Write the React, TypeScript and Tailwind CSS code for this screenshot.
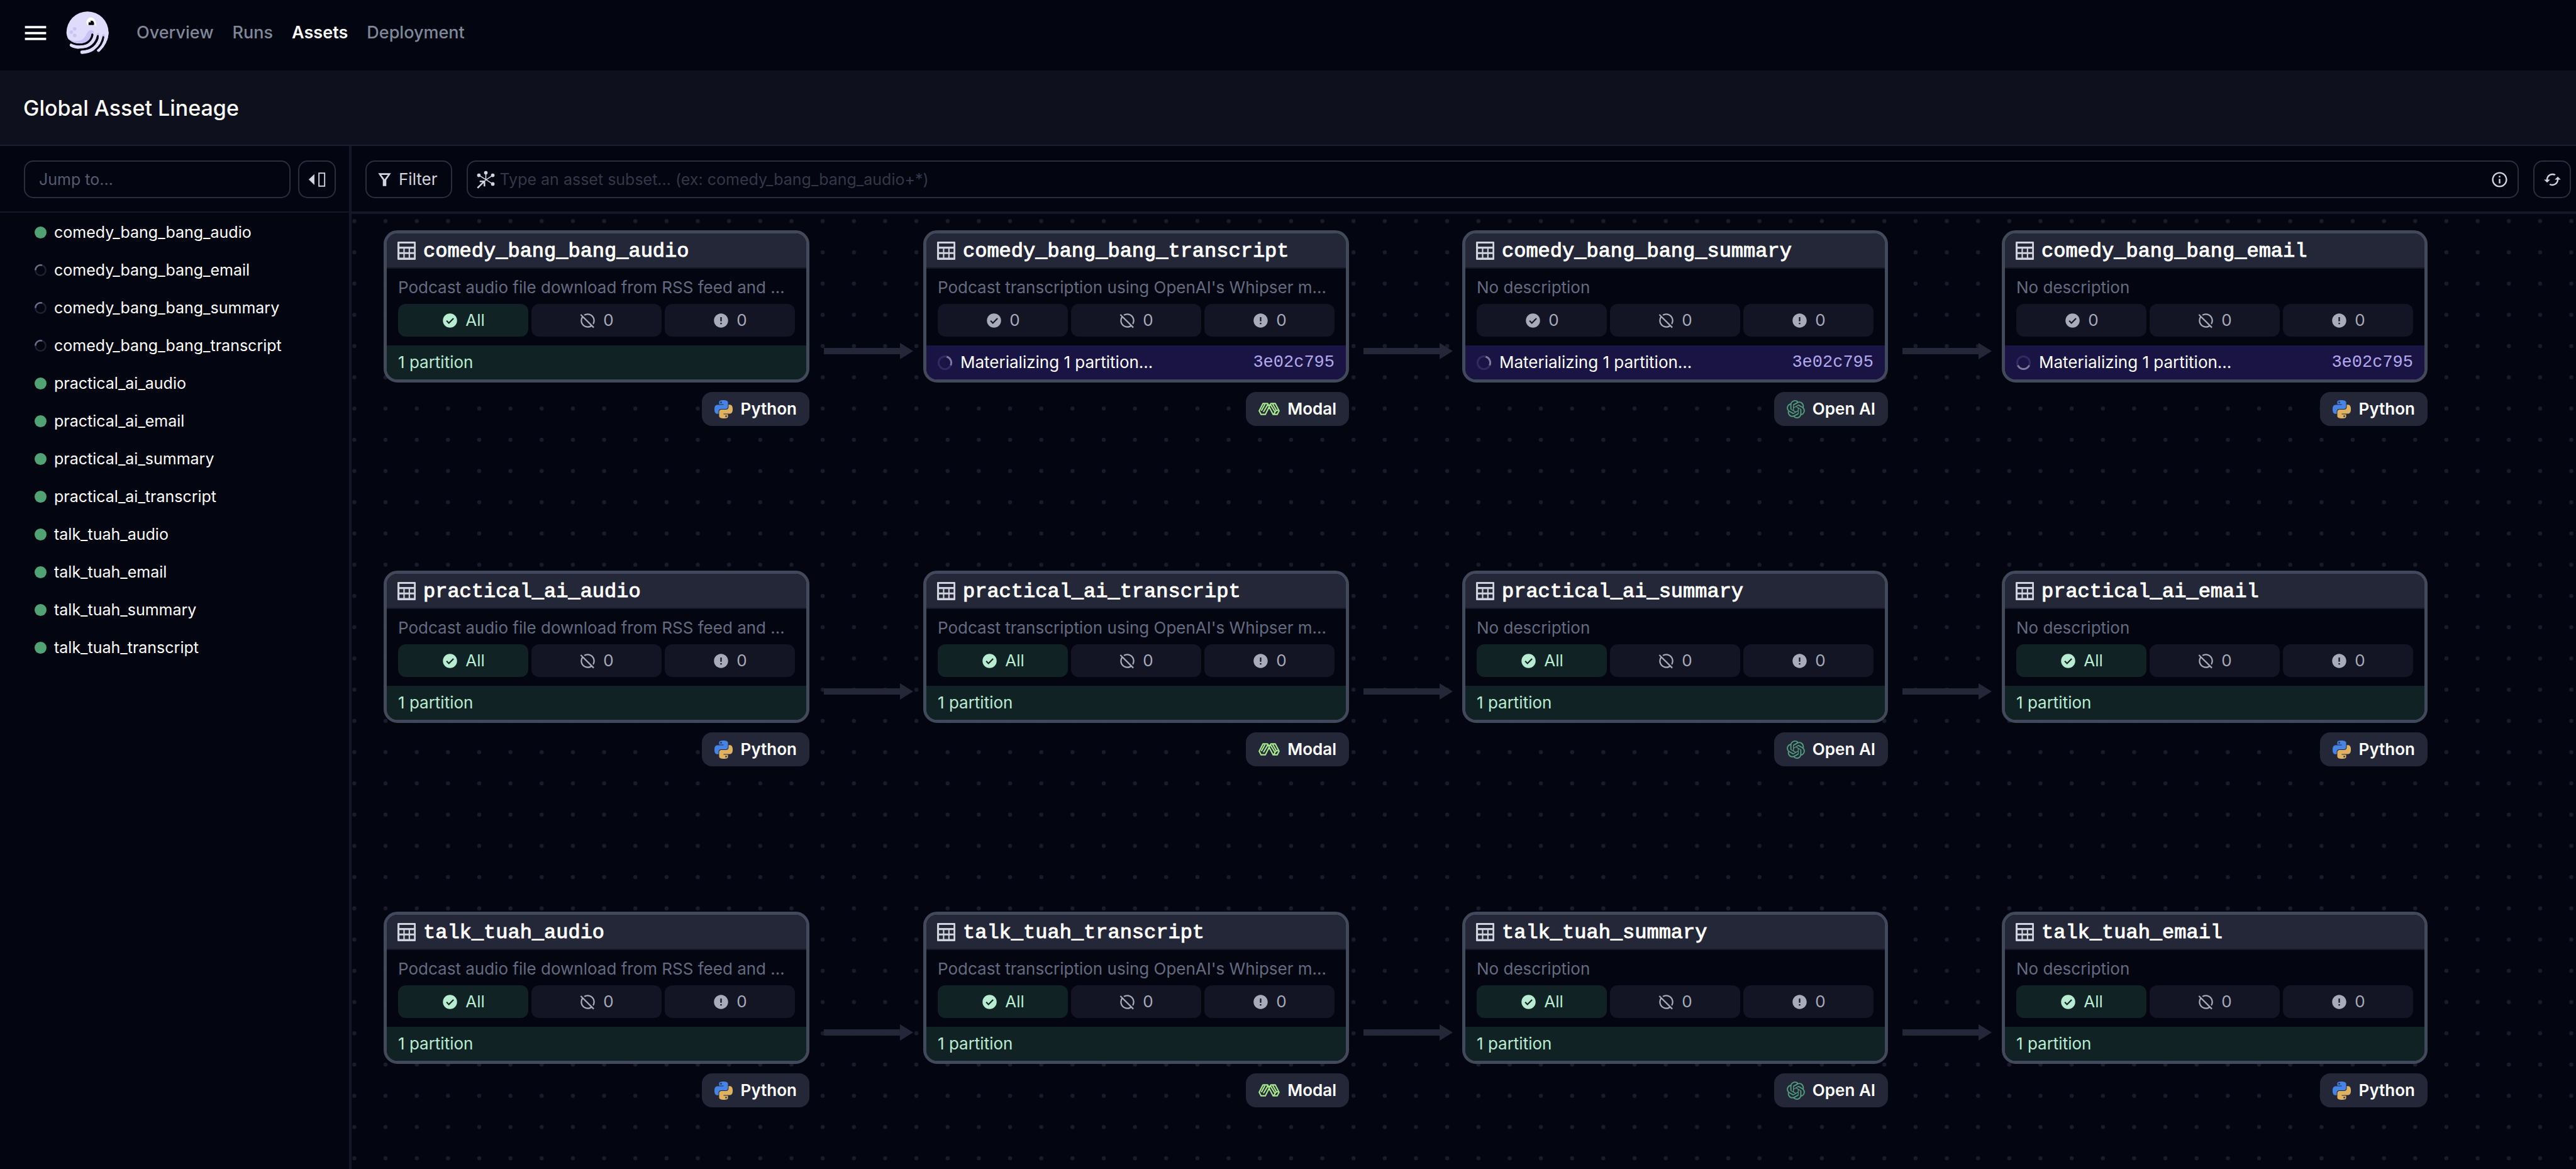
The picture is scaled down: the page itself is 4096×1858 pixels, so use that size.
import type { ReactNode } from "react";
import { MdCached, MdError, MdHideSource, MdInfoOutline, MdMenu } from "react-icons/md";
import { SiOpenai } from "react-icons/si";

type Kind = "python" | "modal" | "openai";

type AssetNode = {
  name: string;
  description: string;
  kind: Kind;
  x: number;
  y: number;
  running?: "top" | "bottom";
};

const AUDIO = "Podcast audio file download from RSS feed and …";
const TRANSCRIPT = "Podcast transcription using OpenAI's Whipser m…";
const NONE = "No description";

const COLUMNS = [51, 909, 1766, 2624];
const ROWS = [26, 567, 1109];

const NODES: AssetNode[] = [
  { name: "comedy_bang_bang_audio", description: AUDIO, kind: "python", x: COLUMNS[0], y: ROWS[0] },
  { name: "comedy_bang_bang_transcript", description: TRANSCRIPT, kind: "modal", x: COLUMNS[1], y: ROWS[0], running: "top" },
  { name: "comedy_bang_bang_summary", description: NONE, kind: "openai", x: COLUMNS[2], y: ROWS[0], running: "top" },
  { name: "comedy_bang_bang_email", description: NONE, kind: "python", x: COLUMNS[3], y: ROWS[0], running: "bottom" },
  { name: "practical_ai_audio", description: AUDIO, kind: "python", x: COLUMNS[0], y: ROWS[1] },
  { name: "practical_ai_transcript", description: TRANSCRIPT, kind: "modal", x: COLUMNS[1], y: ROWS[1] },
  { name: "practical_ai_summary", description: NONE, kind: "openai", x: COLUMNS[2], y: ROWS[1] },
  { name: "practical_ai_email", description: NONE, kind: "python", x: COLUMNS[3], y: ROWS[1] },
  { name: "talk_tuah_audio", description: AUDIO, kind: "python", x: COLUMNS[0], y: ROWS[2] },
  { name: "talk_tuah_transcript", description: TRANSCRIPT, kind: "modal", x: COLUMNS[1], y: ROWS[2] },
  { name: "talk_tuah_summary", description: NONE, kind: "openai", x: COLUMNS[2], y: ROWS[2] },
  { name: "talk_tuah_email", description: NONE, kind: "python", x: COLUMNS[3], y: ROWS[2] },
];

const SIDEBAR = [
  { name: "comedy_bang_bang_audio", running: false },
  { name: "comedy_bang_bang_email", running: true },
  { name: "comedy_bang_bang_summary", running: true },
  { name: "comedy_bang_bang_transcript", running: true },
  { name: "practical_ai_audio", running: false },
  { name: "practical_ai_email", running: false },
  { name: "practical_ai_summary", running: false },
  { name: "practical_ai_transcript", running: false },
  { name: "talk_tuah_audio", running: false },
  { name: "talk_tuah_email", running: false },
  { name: "talk_tuah_summary", running: false },
  { name: "talk_tuah_transcript", running: false },
];

function Logo() {
  return (
    <svg viewBox="276 56 216 218" className="h-[68px] w-[68px]" aria-label="Dagster" role="img">
      <path
        fill="#dedcfa"
        d="M277 165A107 108 0 0 1 492 165C491 180 488 195 484 205L440 190L410 172C400 205 375 220 340 220C305 220 279 202 277 165Z"
      />
      <g fill="none" stroke="#dedcfa" strokeWidth="18" strokeLinecap="round">
        <path d="M303 228C330 242 375 242 398 222C415 207 422 190 425 172" />
        <path d="M357 264C400 262 440 240 452 185" />
        <path d="M441 253C465 230 481 200 483 165" />
      </g>
      <path
        fill="#c9c2f6"
        d="M281 186C296 207 325 211 345 205C382 196 376 152 402 152C417 152 420 163 413 173C404 205 378 220 344 220C310 220 289 208 281 186Z"
      />
      <circle cx="438" cy="174" r="7" fill="#c9c2f6" />
      <circle cx="466" cy="179" r="7" fill="#c9c2f6" />
      <g fill="none" stroke="#030511" strokeWidth="10" strokeLinecap="round">
        <path d="M409 174C406 203 380 225 345 225C322 225 303 218 290 206" />
        <path d="M437 182C434 218 400 251 345 251" />
        <path d="M465 188C462 215 448 236 424 255" />
      </g>
      <g fill="#c9c2f6">
        <circle cx="319" cy="145" r="9" />
        <circle cx="302" cy="162" r="9" />
        <circle cx="319" cy="179" r="9" />
      </g>
      <path fill="#fff" d="M384 128C372 106 386 87 403 87C420 88 431 110 427 131C424 125 388 123 384 128Z" />
      <path fill="#030511" d="M390 126C388 112 394 103 405 103C416 104 420 115 417 126Z" />
      <circle cx="397" cy="109" r="4" fill="#fff" />
    </svg>
  );
}

function CollapseIcon() {
  return (
    <svg viewBox="60 98 96 92" className="h-[29px] w-[30px]" aria-hidden="true">
      <path fill="#d2d5de" d="M66 143L95 116V171Z" />
      <rect x="118" y="111" width="29" height="66" fill="none" stroke="#d2d5de" strokeWidth="6" />
    </svg>
  );
}

function FilterIcon() {
  return (
    <svg viewBox="416 108 68 72" className="h-[23px] w-[21px]" aria-hidden="true">
      <path fill="#d2d5de" fillRule="evenodd" d="M417 111H483L459 146V177H441V146ZM433 120L450 142L467 120Z" />
    </svg>
  );
}

function SelectorIcon() {
  return (
    <svg viewBox="917 98 92 92" className="h-[29px] w-[29px] shrink-0" aria-hidden="true">
      <g fill="none" stroke="#d2d5de" strokeWidth="5">
        <path d="M963 109V145M928 122L998 166M998 122L958 149" />
      </g>
      <path fill="none" stroke="#d2d5de" strokeWidth="8" d="M921 186L955 153M932 153H956V178" />
      <g fill="#d2d5de">
        <circle cx="963" cy="109" r="9" />
        <circle cx="928" cy="122" r="9" />
        <circle cx="998" cy="122" r="9" />
        <circle cx="998" cy="166" r="9" />
      </g>
    </svg>
  );
}

function TableIcon() {
  return (
    <svg viewBox="0 0 93 93" className="h-[29px] w-[29px] shrink-0" aria-hidden="true">
      <path
        fill="#d0d2dd"
        fillRule="evenodd"
        d="M4 0H89Q93 0 93 4V89Q93 93 89 93H4Q0 93 0 89V4Q0 0 4 0ZM10 10V26H84V10ZM10 36V54H30V36ZM37 36V54H57V36ZM64 36V54H84V36ZM10 63V82H30V63ZM37 63V82H57V63ZM64 63V82H84V63Z"
      />
    </svg>
  );
}

function CheckIcon() {
  return (
    <svg viewBox="0 0 24 24" className="h-[27px] w-[27px]" aria-hidden="true">
      <mask id="check-cutout">
        <rect width="24" height="24" fill="#fff" />
        <path d="M7.2 12.3L10.4 15.5L17 8.9" fill="none" stroke="#000" strokeWidth="1.9" />
      </mask>
      <circle cx="12" cy="12" r="10" fill="currentColor" mask="url(#check-cutout)" />
    </svg>
  );
}

function PythonIcon() {
  return (
    <svg viewBox="0 0 24 24" className="mr-px h-[29px] w-[29px]" aria-hidden="true">
      <path
        fill="#4583e4"
        d="M14.25.18l.9.2.73.26.59.3.45.32.34.34.25.34.16.33.1.3.04.26.02.2-.01.13V8.5l-.05.63-.13.55-.21.46-.26.38-.3.31-.33.25-.35.19-.35.14-.33.1-.3.07-.26.04-.21.02H8.77l-.69.05-.59.14-.5.22-.41.27-.33.32-.27.35-.2.36-.15.37-.1.35-.07.32-.04.27-.02.21v3.06H3.17l-.21-.03-.28-.07-.32-.12-.35-.18-.36-.26-.36-.36-.35-.46-.32-.59-.28-.73-.21-.88-.14-1.05-.05-1.23.06-1.22.16-1.04.24-.87.32-.71.36-.57.4-.44.42-.33.42-.24.4-.16.36-.1.32-.05.24-.01h.16l.06.01h8.16v-.83H6.18l-.01-2.75-.02-.37.05-.34.11-.31.17-.28.25-.26.31-.23.38-.2.44-.18.51-.15.58-.12.64-.1.71-.06.77-.04.84-.02 1.27.05zm-6.3 1.98l-.23.33-.08.41.08.41.23.34.33.22.41.09.41-.09.33-.22.23-.34.08-.41-.08-.41-.23-.33-.33-.22-.41-.09-.41.09z"
      />
      <path
        fill="#dfb261"
        d="M21.04 6.11l.28.06.32.12.35.18.36.27.36.35.35.47.32.59.28.73.21.88.14 1.04.05 1.23-.06 1.23-.16 1.04-.24.86-.32.71-.36.57-.4.45-.42.33-.42.24-.4.16-.36.09-.32.05-.24.02-.16-.01h-8.22v.82h5.84l.01 2.76.02.36-.05.34-.11.31-.17.29-.25.25-.31.24-.38.2-.44.17-.51.15-.58.13-.64.09-.71.07-.77.04-.84.01-1.27-.04-1.07-.14-.9-.2-.73-.25-.59-.3-.45-.33-.34-.34-.25-.34-.16-.33-.1-.3-.04-.25-.02-.2.01-.13v-5.34l.05-.64.13-.54.21-.46.26-.38.3-.32.33-.24.35-.2.35-.14.33-.1.3-.06.26-.04.21-.02.13-.01h5.84l.69-.05.59-.14.5-.21.41-.28.33-.32.27-.35.2-.36.15-.36.1-.35.07-.32.04-.28.02-.21V6.07h2.09l.14.01zM14.57 20.36l-.23.33-.08.41.08.41.23.33.33.23.41.08.41-.08.33-.23.23-.33.08-.41-.08-.41-.23-.33-.33-.23-.41-.08-.41.08z"
      />
    </svg>
  );
}

function ModalIcon() {
  return (
    <svg viewBox="80 332 112 65" className="h-5 w-[34px]" aria-hidden="true">
      <g fill="none" stroke="#a8ea8e" strokeWidth="7" strokeLinejoin="round">
        <path d="M84 374L104 336H128L136 350L145 336H168L188 374L178 393H157L136 354L116 393H94Z" />
        <path d="M95 374L114 340M106 380L129 342M143 342L167 380L160 392M154 338L174 372H188M167 380L174 372" />
      </g>
    </svg>
  );
}

const TAGS: Record<Kind, { label: string; icon: ReactNode }> = {
  python: { label: "Python", icon: <PythonIcon /> },
  modal: { label: "Modal", icon: <ModalIcon /> },
  openai: { label: "Open AI", icon: <SiOpenai className="h-[29px] w-[29px] text-[#4f9c7c]" aria-hidden="true" /> },
};

function ListSpinner() {
  return (
    <svg viewBox="0 0 19 19" className="h-[19px] w-[19px]" role="img" aria-label="In progress">
      <circle cx="9.5" cy="9.5" r="8.2" fill="none" stroke="#202233" strokeWidth="2.4" />
      <path d="M1.3 9.5A8.2 8.2 0 0 1 12 1.7" fill="none" stroke="#6a7289" strokeWidth="2.4" />
    </svg>
  );
}

function RunSpinner({ arc }: { arc: "top" | "bottom" }) {
  return (
    <svg viewBox="0 0 24 24" className="h-[23px] w-[23px] shrink-0" role="img" aria-label="In progress">
      <circle cx="12" cy="12" r="10.5" fill="none" stroke="#322b63" strokeWidth="3" />
      <path
        d={arc === "top" ? "M15 1.9A10.5 10.5 0 0 1 21.5 16.4" : "M21.5 16.4A10.5 10.5 0 0 1 2.5 16.4"}
        fill="none"
        stroke="#7d7b9c"
        strokeWidth="3"
      />
    </svg>
  );
}

function Stat({ icon, value, tone }: { icon: ReactNode; value: string; tone: "green" | "gray" }) {
  return (
    <span
      className={
        tone === "green"
          ? "flex h-[52px] flex-1 items-center justify-center gap-[11px] rounded-xl bg-[#112224] text-[#b8ecd0]"
          : "flex h-[52px] flex-1 items-center justify-center gap-[11px] rounded-xl bg-[#131525] text-[#a8abb9]"
      }
    >
      {icon}
      {value}
    </span>
  );
}

function AssetCard({ node }: { node: AssetNode }) {
  const tag = TAGS[node.kind];
  return (
    <div className="absolute flex w-[677px] flex-col items-end gap-[15px]" style={{ left: node.x, top: node.y }}>
      <article className="w-full overflow-hidden rounded-[22px] border-[5px] border-[#42495b] bg-[#030511]">
        <header className="flex h-14 items-center gap-3 border-b-2 border-[#151728] bg-[#242737] px-[17px]">
          <TableIcon />
          <h2 className="pt-1 font-['Liberation_Mono',monospace] text-[32px] leading-9 text-white [-webkit-text-stroke:1px_white]">
            {node.name}
          </h2>
        </header>
        <p className="truncate px-[18px] pt-2 pb-1 text-[26px] leading-[44px] text-[#636b80]">{node.description}</p>
        <div className="flex gap-[5px] px-[18px] pb-[14px]">
          <Stat icon={<CheckIcon />} value={node.running ? "0" : "All"} tone={node.running ? "gray" : "green"} />
          <Stat icon={<MdHideSource className="h-[27px] w-[27px]" />} value="0" tone="gray" />
          <Stat icon={<MdError className="h-[27px] w-[27px]" />} value="0" tone="gray" />
        </div>
        {node.running ? (
          <footer className="flex h-[54px] items-center gap-[13px] bg-[#191443] px-[18px] text-white">
            <RunSpinner arc={node.running} />
            <span className="flex-1">Materializing 1 partition...</span>
            <a href="#run" className="font-['Liberation_Mono',monospace] text-[27px] text-[#b2a9ee]">
              3e02c795
            </a>
          </footer>
        ) : (
          <footer className="flex h-[54px] items-center bg-[#112224] px-[18px] text-[#b8ecd0]">1 partition</footer>
        )}
      </article>
      <span className="flex h-[54px] items-center gap-3 rounded-2xl bg-[#242737] px-5 font-semibold text-white">
        {tag.icon}
        {tag.label}
      </span>
    </div>
  );
}

function CanvasBackdrop() {
  return (
    <svg className="absolute inset-0 h-full w-full" aria-hidden="true">
      <defs>
        <pattern id="dots" x="-20.4" y="-13.4" width="49.65" height="49.65" patternUnits="userSpaceOnUse">
          <circle cx="24.8" cy="24.8" r="3.2" fill="#1a1c2c" />
        </pattern>
      </defs>
      <rect width="100%" height="100%" fill="url(#dots)" />
      {ROWS.flatMap((y) =>
        COLUMNS.slice(0, 3).map((x) => (
          <path key={`${x}-${y}`} fill="#242737" transform={`translate(${x + 677} ${y + 192})`} d="M23 -5H144V-13L165 0L144 13V5H23Z" />
        )),
      )}
    </svg>
  );
}

export default function App() {
  return (
    <div className="flex min-h-screen flex-col bg-[#030511] font-['Inter',sans-serif] text-[26px] leading-9 text-white">
      <header className="flex h-28 items-center pb-2 pl-[34px]">
        <button type="button" aria-label="Menu" className="mr-[26px] text-white">
          <MdMenu className="h-[45px] w-[45px]" />
        </button>
        <Logo />
        <nav className="ml-11 flex gap-[30px] text-[27px] font-medium text-[#7f8899]">
          <a href="#overview">Overview</a>
          <a href="#runs">Runs</a>
          <a href="#assets" className="font-semibold text-white" aria-current="page">
            Assets
          </a>
          <a href="#deployment">Deployment</a>
        </nav>
      </header>

      <div className="flex h-[120px] items-center border-b-2 border-[#1b1e2f] bg-[#0e101d] pt-0.5 pl-[37px]">
        <h1 className="text-[34px] leading-10 font-medium">Global Asset Lineage</h1>
      </div>

      <div className="flex flex-1">
        <aside className="flex w-[559px] shrink-0 flex-col border-r-4 border-[#151728]">
          <div className="flex gap-3 border-b-2 border-[#151728] pt-[23px] pr-[21px] pb-[21px] pl-[38px]">
            <input
              type="text"
              aria-label="Jump to"
              placeholder="Jump to…"
              className="h-[60px] min-w-0 flex-1 rounded-[15px] border-2 border-[#2a2e3e] bg-transparent px-[22px] text-[25px] outline-none placeholder:text-[#545c70]"
            />
            <button
              type="button"
              aria-label="Collapse sidebar"
              className="flex h-[60px] w-[60px] items-center justify-center rounded-[15px] border-2 border-[#2a2e3e]"
            >
              <CollapseIcon />
            </button>
          </div>
          <ul className="pt-px text-[25px]">
            {SIDEBAR.map((item) => (
              <li key={item.name}>
                <a href={`#${item.name}`} className="flex h-[60px] items-center gap-3 pl-[55px]">
                  {item.running ? <ListSpinner /> : <span className="h-[19px] w-[19px] rounded-full bg-[#52a374]" />}
                  {item.name}
                </a>
              </li>
            ))}
          </ul>
        </aside>

        <main className="flex min-w-0 flex-1 flex-col">
          <div className="flex border-b-4 border-[#151728] pt-[23px] pr-2 pb-[21px] pl-[22px]">
            <button
              type="button"
              className="flex h-[60px] items-center gap-3 rounded-[15px] border-2 border-[#2a2e3e] pr-[21px] pl-[18px] text-[#d2d5de]"
            >
              <FilterIcon />
              Filter
            </button>
            <div className="ml-[23px] flex h-[60px] flex-1 items-center rounded-[15px] border-2 border-[#2a2e3e] pr-[14px] pl-[14px]">
              <SelectorIcon />
              <input
                type="text"
                aria-label="Asset subset"
                placeholder="Type an asset subset… (ex: comedy_bang_bang_audio+*)"
                className="ml-2 min-w-0 flex-1 bg-transparent text-[25px] outline-none placeholder:text-[#333848]"
              />
              <button type="button" aria-label="Selection syntax help" className="text-[#d2d5de]">
                <MdInfoOutline className="h-[29px] w-[29px]" />
              </button>
            </div>
            <button
              type="button"
              aria-label="Refresh"
              className="ml-[23px] flex h-[60px] w-[60px] items-center justify-center rounded-[15px] border-2 border-[#2a2e3e] text-[#d2d5de]"
            >
              <MdCached className="h-[29px] w-[29px]" />
            </button>
          </div>
          <div className="relative min-h-[1440px] flex-1 overflow-hidden">
            <CanvasBackdrop />
            {NODES.map((node) => (
              <AssetCard key={node.name} node={node} />
            ))}
          </div>
        </main>
      </div>
    </div>
  );
}
